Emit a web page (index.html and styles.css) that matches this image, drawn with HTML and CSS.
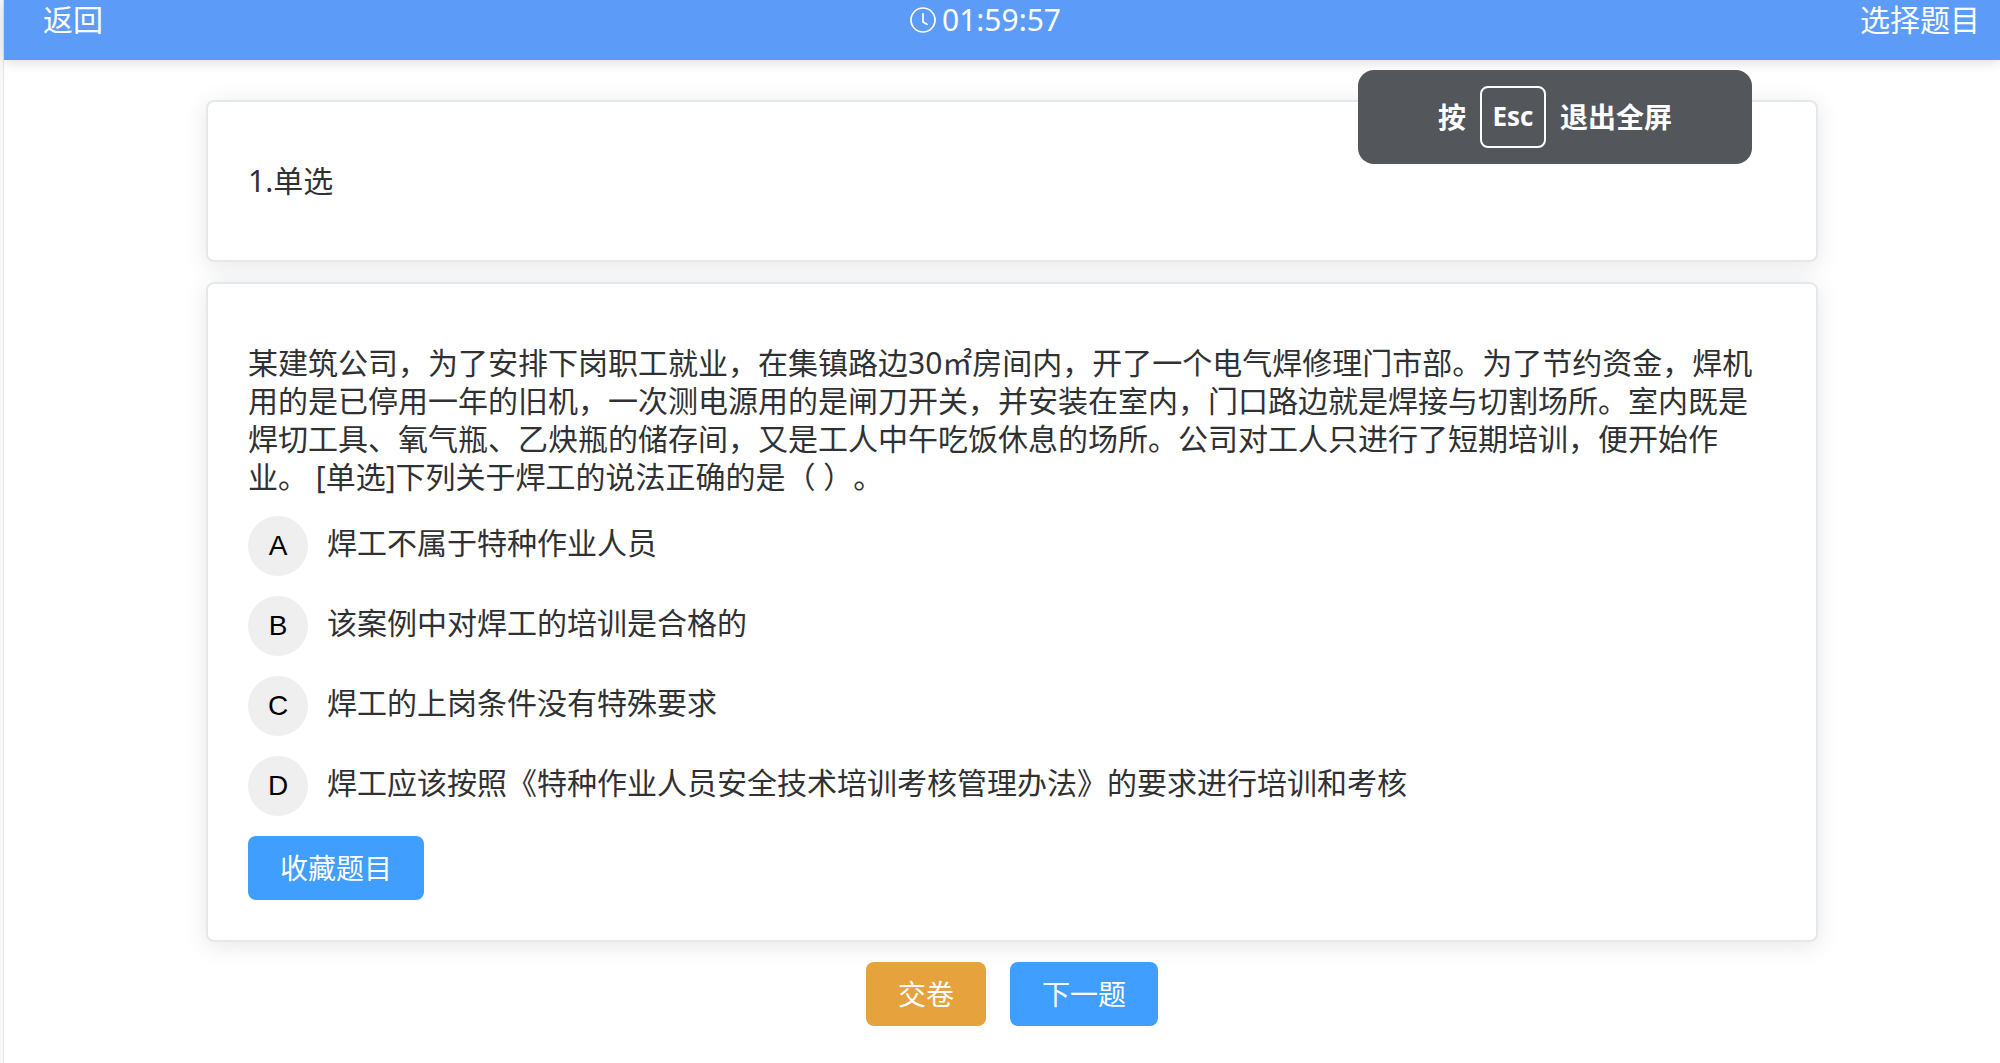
FILE: index.html
```html
<!DOCTYPE html>
<html lang="zh-CN">
<head>
<meta charset="utf-8">
<meta name="viewport" content="width=device-width, initial-scale=1">
<title>答题</title>
<link rel="stylesheet" href="styles.css">
</head>
<body>
<div class="app">
  <header class="topbar">
    <a class="topbar-link" href="#back">返回</a>
    <div class="timer">
      <svg class="timer-icon" viewBox="0 0 26 26" fill="none" stroke="currentColor" stroke-width="1.7" stroke-linecap="round" stroke-linejoin="round" aria-hidden="true">
        <circle cx="13" cy="13" r="12"/>
        <path d="M13 6.500v8.500l4 2.300"/>
      </svg>
      <span>01:59:57</span>
    </div>
    <a class="topbar-link" href="#questions">选择题目</a>
  </header>

  <main class="content">
    <section class="card">
      <h1 class="text">1.单选</h1>
    </section>

    <section class="card card-question">
      <p class="text">某建筑公司，为了安排下岗职工就业，在集镇路边30㎡房间内，开了一个电气焊修理门市部。为了节约资金，焊机用的是已停用一年的旧机，一次测电源用的是闸刀开关，并安装在室内，门口路边就是焊接与切割场所。室内既是焊切工具、氧气瓶、乙炔瓶的储存间，又是工人中午吃饭休息的场所。公司对工人只进行了短期培训，便开始作业。 [单选]下列关于焊工的说法正确的是（ ）。</p>
      <ul class="options">
        <li class="option"><button class="option-key" type="button" aria-describedby="opt-a">A</button><span class="option-text" id="opt-a">焊工不属于特种作业人员</span></li>
        <li class="option"><button class="option-key" type="button" aria-describedby="opt-b">B</button><span class="option-text" id="opt-b">该案例中对焊工的培训是合格的</span></li>
        <li class="option"><button class="option-key" type="button" aria-describedby="opt-c">C</button><span class="option-text" id="opt-c">焊工的上岗条件没有特殊要求</span></li>
        <li class="option"><button class="option-key" type="button" aria-describedby="opt-d">D</button><span class="option-text" id="opt-d">焊工应该按照《特种作业人员安全技术培训考核管理办法》的要求进行培训和考核</span></li>
      </ul>
      <button class="btn btn-primary" type="button">收藏题目</button>
    </section>

    <div class="actions">
      <button class="btn btn-warning" type="button">交卷</button>
      <button class="btn btn-primary" type="button">下一题</button>
    </div>
  </main>
</div>

<div class="toast" role="status">
  <span>按</span><kbd class="toast-key">Esc</kbd><span>退出全屏</span>
</div>
</body>
</html>
```
FILE: styles.css
```css
* {
  box-sizing: border-box;
}

body {
  margin: 0;
  background: #f8f8f8;
  color: #303133;
  font-family: "Noto Sans", "Noto Sans CJK SC", sans-serif;
  font-size: 30px;
  line-height: 38px;
  text-spacing-trim: space-all;
}

.app {
  min-height: 100vh;
  margin-left: 3px;
  border-left: 1px solid #e6e6e6;
  background: #fff;
}

.topbar {
  display: flex;
  justify-content: space-between;
  height: 60px;
  padding: 1px 20px 0 39px;
  background: #5c9cf8;
  color: #fff;
  box-shadow: 0 2px 12px rgba(0, 0, 0, 0.15);
}

.topbar-link {
  color: inherit;
  text-decoration: none;
}

.timer {
  display: flex;
  align-items: center;
  gap: 6px;
  height: 38px;
  padding-left: 8px;
}

.timer-icon {
  width: 26px;
  height: 26px;
}

.content {
  padding: 40px 182px 36px 202px;
}

.card {
  margin-bottom: 20px;
  padding: 60px 40px;
  border: 2px solid #e4e7ed;
  border-radius: 8px;
  background: #fff;
  box-shadow: 0 4px 24px rgba(0, 0, 0, 0.1);
}

.card-question {
  padding-bottom: 40px;
}

.text {
  margin: 0;
  font-size: 30px;
  font-weight: 400;
}

.options {
  display: grid;
  gap: 20px;
  margin: 20px 0;
  padding: 0;
  list-style: none;
}

.option {
  display: flex;
  gap: 19px;
}

.option-key {
  flex: none;
  width: 60px;
  height: 60px;
  padding: 0;
  border: 0;
  border-radius: 50%;
  background: #efefef;
  color: #000;
  font-family: "Liberation Sans", Arial, sans-serif;
  font-size: 28px;
}

.option-text {
  line-height: 54px;
}

.btn {
  display: block;
  height: 64px;
  padding: 0 32px;
  border: 0;
  border-radius: 8px;
  color: #fff;
  font-family: inherit;
  font-size: 28px;
  line-height: 62px;
}

.btn-primary {
  background: #409eff;
}

.btn-warning {
  background: #e6a23c;
}

.actions {
  display: flex;
  justify-content: center;
  gap: 24px;
}

.toast {
  position: absolute;
  top: 70px;
  right: 248px;
  display: flex;
  align-items: center;
  justify-content: center;
  gap: 14px;
  width: 394px;
  height: 94px;
  border-radius: 16px;
  background: rgba(74, 77, 82, 0.95);
  color: #fff;
  font-size: 28px;
  font-weight: 700;
}

.toast-key {
  width: 66px;
  height: 62px;
  border: 2px solid #fff;
  border-radius: 8px;
  font-family: "Open Sans", "Noto Sans", sans-serif;
  font-size: 26px;
  line-height: 56px;
  text-align: center;
}
```
